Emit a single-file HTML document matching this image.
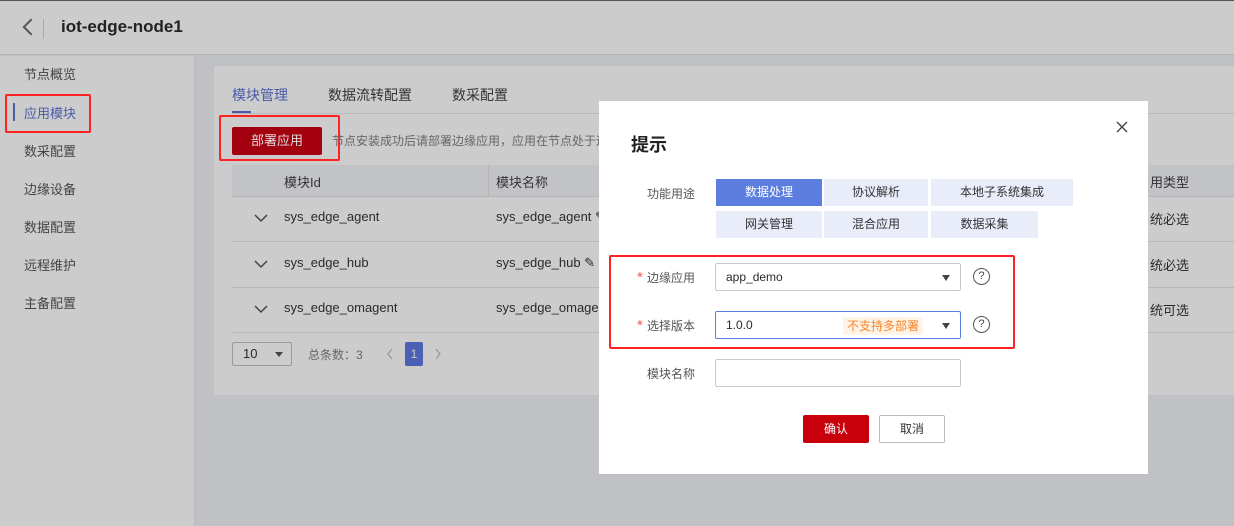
<!DOCTYPE html>
<html><head><meta charset="utf-8"><style>
*{box-sizing:border-box;margin:0;padding:0}
body{width:1234px;height:526px;overflow:hidden;background:#c0c1c4;font-family:"Liberation Sans","Noto Sans CJK SC",sans-serif;font-size:13px;color:#2a2a2a;position:relative}
.a{position:absolute}
.hdr{left:0;top:0;width:1234px;height:55px;background:#cccccc;border-bottom:1px solid #b4b4b4;border-top:1px solid #555}
.side{left:0;top:56px;width:195px;height:470px;background:#cccccc;border-right:1px solid #bbb}
.side div{position:absolute;left:24px;font-size:13px;color:#444}
.card{left:214px;top:66px;width:1030px;height:329px;background:#cccccc}
.red{border:2px solid #f22;border-radius:2px}
.row{left:232px;width:1010px;height:46px;border-bottom:1px solid #b8b8b8}
.row span{position:absolute;top:13px}
.row svg{position:absolute;left:22px;top:17px}
.chip{position:absolute;height:27px;background:#e8edf9;text-align:center;line-height:27px;color:#333;font-size:12px}
.lbl{position:absolute;width:100px;text-align:right;left:595px;font-size:12px;color:#555}
.sel{position:absolute;left:715px;width:246px;height:28px;border:1px solid #c8c8c8;border-radius:2px;background:#fff;font-size:12px;padding-left:10px;line-height:26px}
.tri{position:absolute;right:10px;top:11px;border-left:4px solid transparent;border-right:4px solid transparent;border-top:6px solid #444}
.q{position:absolute;left:973px;width:17px;height:17px;border:1.3px solid #555;border-radius:50%;font-size:11px;text-align:center;line-height:15px;color:#444}
</style></head><body>
<div class="a hdr">
 <div class="a" style="width:12px;height:12px;border-left:2px solid #555;border-bottom:2px solid #555;transform:rotate(45deg);left:25px;top:20px"></div>
 <div class="a" style="left:43px;top:18px;width:1px;height:20px;background:#aaa"></div>
 <div class="a" style="left:61px;top:16px;font-size:17px;font-weight:bold;color:#222">iot-edge-node1</div>
</div>
<div class="a side">
 <div style="top:8px">节点概览</div>
 <div style="top:47px;color:#4a5aa8">应用模块</div>
 <div style="top:85px">数采配置</div>
 <div style="top:123px">边缘设备</div>
 <div style="top:161px">数据配置</div>
 <div style="top:199px">远程维护</div>
 <div style="top:237px">主备配置</div>
</div>
<div class="a" style="left:13px;top:103px;width:2px;height:18px;background:#4a5aa8"></div>
<div class="a red" style="left:5px;top:94px;width:86px;height:39px"></div>
<div class="a card"></div>
<div class="a" style="left:232px;top:85px;font-size:14px;color:#4a5aa8">模块管理</div>
<div class="a" style="left:328px;top:85px;font-size:14px;color:#333">数据流转配置</div>
<div class="a" style="left:452px;top:85px;font-size:14px;color:#333">数采配置</div>
<div class="a" style="left:232px;top:113px;width:1010px;height:1px;background:#b8b8b8"></div>
<div class="a" style="left:232px;top:111px;width:19px;height:2px;background:#4a5aa8"></div>
<div class="a" style="left:232px;top:127px;width:90px;height:28px;background:#a30010;color:#ddd;text-align:center;line-height:28px;border-radius:2px">部署应用</div>
<div class="a red" style="left:219px;top:115px;width:121px;height:46px"></div>
<div class="a" style="left:332px;top:132px;font-size:12px;color:#666">节点安装成功后请部署边缘应用，应用在节点处于运</div>
<div class="a" style="left:232px;top:165px;width:1010px;height:32px;background:#c2c3c6;border-bottom:1px solid #b5b5b5"></div>
<div class="a" style="left:284px;top:172px;color:#333">模块Id</div>
<div class="a" style="left:488px;top:165px;width:1px;height:32px;background:#b5b5b5"></div>
<div class="a" style="left:496px;top:172px;color:#333">模块名称</div>
<div class="a" style="left:1150px;top:172px;color:#333">用类型</div>
<div class="a row" style="top:196px"><svg width="14" height="10"><path d="M1 2l6 6 6-6" fill="none" stroke="#444" stroke-width="1.5"/></svg><span style="left:52px">sys_edge_agent</span><span style="left:264px">sys_edge_agent ✎</span><span style="left:918px">统必选</span></div>
<div class="a row" style="top:242px"><svg width="14" height="10"><path d="M1 2l6 6 6-6" fill="none" stroke="#444" stroke-width="1.5"/></svg><span style="left:52px">sys_edge_hub</span><span style="left:264px">sys_edge_hub ✎</span><span style="left:918px">统必选</span></div>
<div class="a row" style="top:287px"><svg width="14" height="10"><path d="M1 2l6 6 6-6" fill="none" stroke="#444" stroke-width="1.5"/></svg><span style="left:52px">sys_edge_omagent</span><span style="left:264px">sys_edge_omagent</span><span style="left:918px">统可选</span></div>
<div class="a" style="left:232px;top:342px;width:60px;height:24px;border:1px solid #999;border-radius:2px;padding-left:10px;line-height:22px">10<span class="a" style="left:42px;top:9px;border-left:4px solid transparent;border-right:4px solid transparent;border-top:5px solid #444"></span></div>
<div class="a" style="left:308px;top:346px;color:#666;font-size:12px">总条数：3</div>
<svg class="a" style="left:386px;top:348px" width="8" height="12"><path d="M6 1L2 6l4 5" fill="none" stroke="#999" stroke-width="1.3"/></svg>
<div class="a" style="left:405px;top:342px;width:18px;height:24px;background:#4b5fb5;color:#ccc;text-align:center;line-height:24px;border-radius:2px;font-size:12px">1</div>
<svg class="a" style="left:434px;top:348px" width="8" height="12"><path d="M2 1l4 5-4 5" fill="none" stroke="#999" stroke-width="1.3"/></svg>

<div class="a" style="left:599px;top:101px;width:549px;height:373px;background:#fff"></div>
<div class="a" style="left:631px;top:131px;font-size:18px;font-weight:bold;color:#222">提示</div>
<svg class="a" style="left:1116px;top:121px" width="12" height="12"><path d="M1 1l10 10M11 1L1 11" stroke="#444" stroke-width="1.4"/></svg>
<div class="lbl" style="top:185px">功能用途</div>
<div class="chip" style="left:716px;top:179px;width:106px;background:#5c7fdf;color:#fff">数据处理</div>
<div class="chip" style="left:824px;top:179px;width:104px">协议解析</div>
<div class="chip" style="left:931px;top:179px;width:142px">本地子系统集成</div>
<div class="chip" style="left:716px;top:211px;width:106px">网关管理</div>
<div class="chip" style="left:824px;top:211px;width:104px">混合应用</div>
<div class="chip" style="left:931px;top:211px;width:107px">数据采集</div>
<div class="a red" style="left:609px;top:255px;width:406px;height:94px"></div>
<div class="lbl" style="top:269px"><span style="color:#f55;font-size:15px">* </span>边缘应用</div>
<div class="sel" style="top:263px">app_demo<i class="tri"></i></div>
<div class="q" style="top:268px">?</div>
<div class="lbl" style="top:317px"><span style="color:#f55;font-size:15px">* </span>选择版本</div>
<div class="sel" style="top:311px;border-color:#5c7fdf">1.0.0<span class="a" style="left:127px;top:5px;height:18px;line-height:18px;background:#fff3e6;color:#f8842b;padding:0 4px">不支持多部署</span><i class="tri"></i></div>
<div class="q" style="top:316px">?</div>
<div class="lbl" style="top:365px">模块名称</div>
<div class="sel" style="top:359px"></div>
<div class="a" style="left:803px;top:415px;width:66px;height:28px;background:#c7000b;color:#fff;text-align:center;line-height:28px;border-radius:2px;font-size:12px">确认</div>
<div class="a" style="left:879px;top:415px;width:66px;height:28px;border:1px solid #bbb;color:#333;text-align:center;line-height:26px;border-radius:2px;font-size:12px">取消</div>
</body></html>
